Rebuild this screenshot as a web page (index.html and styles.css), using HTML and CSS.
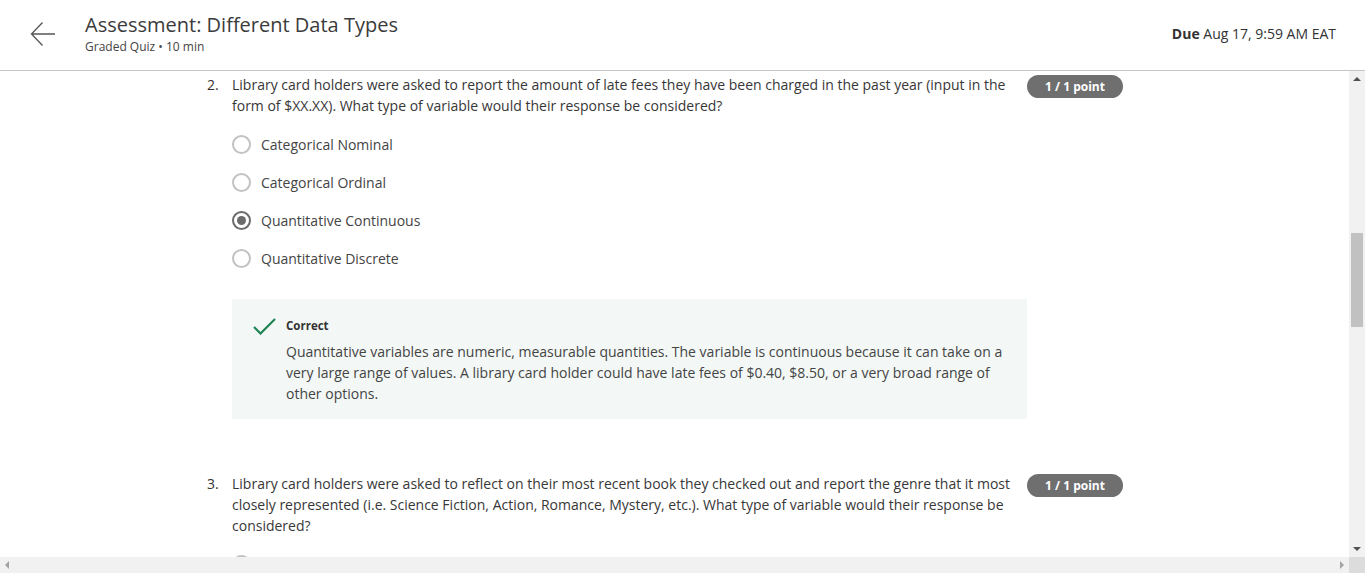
FILE: index.html
```html
<!DOCTYPE html>
<html lang="en">
<head>
<meta charset="utf-8">
<title>Assessment: Different Data Types</title>
<link rel="stylesheet" href="styles.css">
</head>
<body>
<header class="top">
  <div class="back">
    <svg width="26" height="26" viewBox="0 0 26 26"><path d="M12.5 1.5 L1.5 13 L12.5 24.5 M1.5 13 H25" fill="none" stroke="#555" stroke-width="1.3"/></svg>
  </div>
  <div class="titles">
    <h1 class="title">Assessment: Different Data Types</h1>
    <div class="sub">Graded Quiz • 10 min</div>
  </div>
  <div class="due"><b>Due</b> Aug 17, 9:59 AM EAT</div>
</header>
<div class="frame">
  <main class="content">
    <section class="question">
      <div class="num">2.</div>
      <div class="body">
        <p class="qtext">Library card holders were asked to report the amount of late fees they have been charged in the past year (input in the form of $XX.XX). What type of variable would their response be considered?</p>
        <div class="options">
          <div class="opt"><span class="radio"></span>Categorical Nominal</div>
          <div class="opt"><span class="radio"></span>Categorical Ordinal</div>
          <div class="opt"><span class="radio on"></span>Quantitative Continuous</div>
          <div class="opt"><span class="radio"></span>Quantitative Discrete</div>
        </div>
        <div class="feedback">
          <svg class="check" width="23" height="17" viewBox="0 0 23 17"><path d="M1 9 L7.5 15.5 L22 1" fill="none" stroke="#1f8354" stroke-width="2.2"/></svg>
          <div class="fbtext">
            <div class="fbhead">Correct</div>
            <p>Quantitative variables are numeric, measurable quantities. The variable is continuous because it can take on a very large range of values. A library card holder could have late fees of $0.40, $8.50, or a very broad range of other options.</p>
          </div>
        </div>
      </div>
      <div class="badge">1 / 1 point</div>
    </section>
    <section class="question q3">
      <div class="num">3.</div>
      <div class="body">
        <p class="qtext">Library card holders were asked to reflect on their most recent book they checked out and report the genre that it most closely represented (i.e. Science Fiction, Action, Romance, Mystery, etc.). What type of variable would their response be considered?</p>
        <div class="options">
          <div class="opt"><span class="radio"></span></div>
        </div>
      </div>
      <div class="badge">1 / 1 point</div>
    </section>
  </main>
  <div class="vbar">
    <span class="arr up"></span>
    <span class="thumb"></span>
    <span class="arr down"></span>
  </div>
  <div class="hbar">
    <span class="arr left"></span>
    <span class="arr right"></span>
  </div>
  <div class="corner"></div>
</div>
</body>
</html>
```
FILE: styles.css
```css
* { box-sizing: border-box; }
html, body { margin: 0; height: 100%; }
body {
  font-family: "Open Sans", "Liberation Sans", sans-serif;
  color: #333;
  background: #fff;
  overflow: hidden;
}
.top {
  height: 71px;
  border-bottom: 1px solid #c4c4c4;
  display: flex;
  align-items: flex-start;
  padding: 0 29px 0 30px;
}
.back { width: 26px; margin-top: 21px; margin-right: 29px; }
.back svg { display: block; }
.titles { flex: 1; padding-top: 11px; }
.title {
  margin: 0;
  font-size: 20px;
  font-weight: 400;
  line-height: 28px;
  color: #3b3b3b;
}
.sub { font-size: 12px; line-height: 16px; color: #444; margin-top: 0; }
.due { font-size: 14px; line-height: 18px; padding-top: 25px; color: #333; }
.due b { font-weight: 700; }

.frame {
  height: 502px;
  display: grid;
  grid-template-columns: 1fr 16px;
  grid-template-rows: 1fr 16px;
}
.content {
  overflow: hidden;
  padding: 3px 0 0 207px;
}
.question { display: flex; align-items: flex-start; }
.q3 { margin-top: 54px; }
.num { width: 25px; font-size: 14px; line-height: 21px; }
.body { width: 795px; }
.qtext { margin: 0; font-size: 14px; line-height: 21px; color: #373737; }
.options { margin-top: 9px; }
.opt {
  display: flex;
  align-items: center;
  height: 38px;
  font-size: 14px;
  color: #444;
}
.radio {
  width: 19px;
  height: 19px;
  border-radius: 50%;
  border: 2px solid #c2c2c2;
  margin-right: 10px;
  flex: none;
  display: flex;
  align-items: center;
  justify-content: center;
}
.radio.on { border-color: #6b6b6b; }
.radio.on::after {
  content: "";
  width: 9px;
  height: 9px;
  border-radius: 50%;
  background: #6b6b6b;
}
.feedback {
  margin-top: 22px;
  background: #f3f8f6;
  display: flex;
  align-items: flex-start;
  padding: 18px 21px 15px 21px;
}
.check { flex: none; margin-right: 10px; margin-top: 1px; display: block; }
.fbtext { flex: 1; }
.fbhead { font-size: 11.5px; font-weight: 700; line-height: 18px; color: #333; }
.fbtext p { margin: 6px 0 0; font-size: 14px; line-height: 21px; color: #444; }
.badge {
  flex: none;
  width: 96px;
  height: 23px;
  margin-top: 1px;
  border-radius: 12px;
  background: #6f6f6f;
  color: #fff;
  font-size: 12px;
  font-weight: 700;
  display: flex;
  align-items: center;
  justify-content: center;
}

.vbar {
  background: #f1f1f1;
  display: flex;
  flex-direction: column;
  align-items: center;
  position: relative;
}
.thumb {
  position: absolute;
  top: 162px;
  left: 2px;
  width: 12px;
  height: 94px;
  background: #c1c1c1;
}
.arr { width: 0; height: 0; position: absolute; }
.arr.up { top: 6px; border-left: 4px solid transparent; border-right: 4px solid transparent; border-bottom: 4px solid #505050; }
.arr.down { bottom: 6px; border-left: 4px solid transparent; border-right: 4px solid transparent; border-top: 4px solid #505050; }
.hbar { background: #f1f1f1; position: relative; }
.arr.left { left: 5px; top: 4px; border-top: 4px solid transparent; border-bottom: 4px solid transparent; border-right: 4px solid #a3a3a3; }
.arr.right { right: 5px; top: 4px; border-top: 4px solid transparent; border-bottom: 4px solid transparent; border-left: 4px solid #a3a3a3; }
.corner { background: #dcdcdc; }
```
